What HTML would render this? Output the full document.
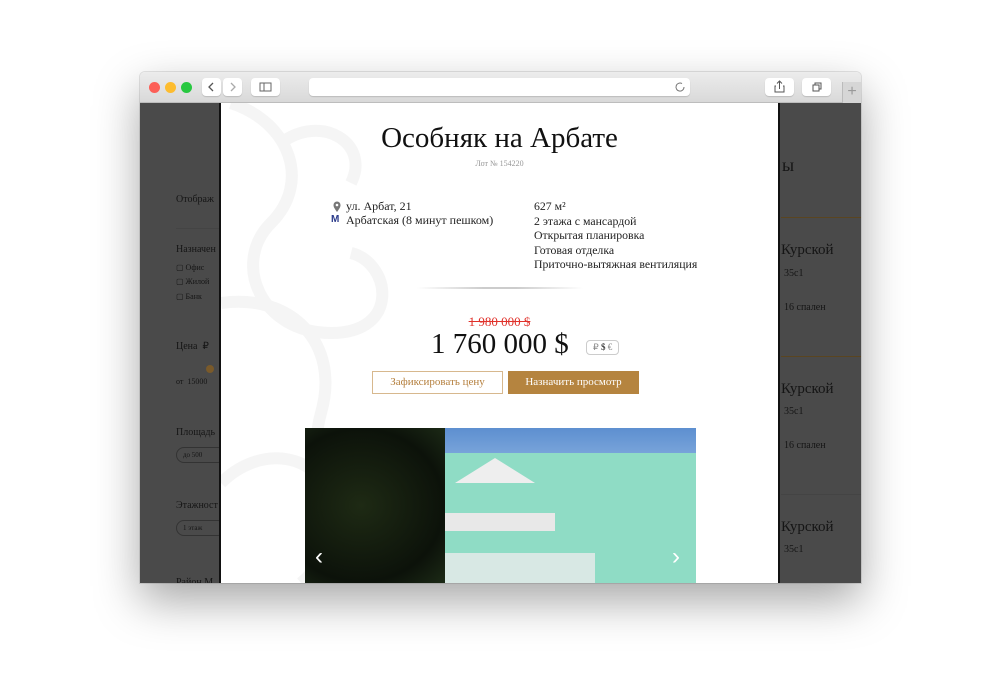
<!DOCTYPE html>
<html><head><meta charset="utf-8"><style>
*{margin:0;padding:0;box-sizing:border-box}
body{width:1000px;height:690px;background:#fff;position:relative;overflow:hidden;font-family:"Liberation Serif",serif}
.win{position:absolute;left:140px;top:72px;width:721px;height:511px;border-radius:5px 5px 0 0;overflow:hidden;box-shadow:0 18px 45px rgba(0,0,0,.35),0 0 0 1px rgba(0,0,0,.1)}
.tb{position:absolute;left:0;top:0;width:721px;height:31px;background:linear-gradient(#ececec,#d9d9d9);border-bottom:1px solid #bdbdbd}
.dot{position:absolute;top:10px;width:11px;height:11px;border-radius:50%}
.btn{position:absolute;top:6px;height:18px;background:#fff;border-radius:4px;box-shadow:0 1px 1px rgba(0,0,0,.15)}
.cont{position:absolute;left:0;top:31px;width:721px;height:480px;background:#4a4a4a;color:#1a1a1a;font-size:10px}
.s{position:absolute;color:#151515}
.modal{position:absolute;left:79px;top:0;width:561px;height:480px;background:#fff;border-left:2px solid #111;border-right:2px solid #111}
.t{position:absolute;white-space:nowrap;color:#222}
</style></head><body>
<div class="win">
<div class="tb">
<div class="dot" style="left:9px;background:#fc5f57"></div>
<div class="dot" style="left:25px;background:#fdbc2e"></div>
<div class="dot" style="left:41px;background:#28c840"></div>
<div class="btn" style="left:62px;width:19px"><svg width="19" height="18"><path d="M11 5l-4 4 4 4" stroke="#555" fill="none" stroke-width="1.3"/></svg></div>
<div class="btn" style="left:83px;width:19px"><svg width="19" height="18"><path d="M8 5l4 4-4 4" stroke="#aaa" fill="none" stroke-width="1.3"/></svg></div>
<div class="btn" style="left:111px;width:29px"><svg width="29" height="18"><rect x="9" y="5" width="11" height="8" stroke="#666" fill="none"/><line x1="13" y1="5" x2="13" y2="13" stroke="#666"/></svg></div>
<div class="btn" style="left:169px;width:381px"><svg width="381" height="18" style="position:absolute;left:0"><path d="M375 9a4 4 0 1 1-2-3.4" stroke="#777" fill="none"/></svg></div>
<div class="btn" style="left:625px;width:29px"><svg width="29" height="18"><path d="M14.5 3v8M12 5.5l2.5-2.5 2.5 2.5M11 8h-1v6h9v-6h-1" stroke="#555" fill="none"/></svg></div>
<div class="btn" style="left:662px;width:29px"><svg width="29" height="18"><rect x="11" y="7" width="6" height="6" stroke="#555" fill="none"/><path d="M13 7V5h6v6h-2" stroke="#555" fill="none"/></svg></div>
<div style="position:absolute;left:702px;top:10px;width:19px;height:21px;background:#d6d6d6;border-left:1px solid #bbb;color:#999;font:16px 'Liberation Sans';text-align:center;line-height:19px">+</div>
</div>
<div class="cont">
<div class="s" style="left:36px;top:91px">Отображ</div>
<div style="position:absolute;left:36px;top:125px;width:43px;border-top:1px solid #444"></div>
<div class="s" style="left:36px;top:141px">Назначен</div>
<div class="s" style="left:36px;top:160px;font-size:8px">▢ Офис</div>
<div class="s" style="left:36px;top:174px;font-size:8px">▢ Жилой</div>
<div class="s" style="left:36px;top:189px;font-size:8px">▢ Банк</div>
<div class="s" style="left:36px;top:238px">Цена &nbsp;₽</div>
<div style="position:absolute;left:66px;top:262px;width:8px;height:8px;border-radius:50%;background:#7a5a2a"></div>
<div class="s" style="left:36px;top:274px;font-size:8px">от &nbsp;15000</div>
<div class="s" style="left:36px;top:324px">Площадь</div>
<div class="s" style="left:36px;top:344px;font-size:7px;border:1px solid #333;border-radius:8px;padding:3px 6px;width:50px">до 500</div>
<div class="s" style="left:36px;top:397px">Этажност</div>
<div class="s" style="left:36px;top:417px;font-size:7px;border:1px solid #333;border-radius:8px;padding:3px 6px;width:50px">1 этаж</div>
<div class="s" style="left:36px;top:474px">Район М</div>
<div class="s" style="left:642px;top:52px;font-size:18px">ы</div>
<div style="position:absolute;left:641px;top:114px;width:80px;border-top:1px solid #5a4520"></div>
<div class="s" style="left:641px;top:139px;font-size:15px">Курской</div>
<div class="s" style="left:644px;top:165px">35с1</div>
<div class="s" style="left:644px;top:199px">16 спален</div>
<div style="position:absolute;left:641px;top:253px;width:80px;border-top:1px solid #5a4520"></div>
<div class="s" style="left:641px;top:278px;font-size:15px">Курской</div>
<div class="s" style="left:644px;top:303px">35с1</div>
<div class="s" style="left:644px;top:337px">16 спален</div>
<div style="position:absolute;left:641px;top:391px;width:80px;border-top:1px solid #444"></div>
<div class="s" style="left:641px;top:416px;font-size:15px">Курской</div>
<div class="s" style="left:644px;top:441px">35с1</div>
<div class="modal">
<svg style="position:absolute;left:0;top:0" width="230" height="480"><g fill="none" stroke="#f5f5f5" stroke-width="12"><path d="M10 0c60 20 80 80 40 120s-10 110 60 110 60-70 20-80"/><path d="M0 200c70-10 120 40 100 110s40 120 -20 170"/><path d="M60 40c40-30 90 0 70 40"/><path d="M0 380c40-40 100-30 110 20"/></g></svg>
<div class="t" style="left:0;width:557px;text-align:center;top:19px;font-size:29px;color:#111">Особняк на Арбате</div>
<div class="t" style="left:0;width:557px;text-align:center;top:56px;font-size:8px;color:#999">Лот № 154220</div>
<svg style="position:absolute;left:111px;top:98px" width="10" height="12"><path d="M5 11C2 7 1.5 5.5 1.5 4a3.5 3.5 0 0 1 7 0c0 1.5-.5 3-3.5 7z" fill="#777"/><circle cx="5" cy="4" r="1.3" fill="#fff"/></svg>
<div class="t" style="left:125px;top:96px;font-size:12px">ул. Арбат, 21</div>
<div class="t" style="left:110px;top:111px;font-size:10px;font-weight:bold;color:#2a3a8a;font-family:'Liberation Sans'">M</div>
<div class="t" style="left:125px;top:110px;font-size:12px">Арбатская (8 минут пешком)</div>
<div class="t" style="left:313px;top:96px;font-size:11.8px;line-height:14.5px">627 м²<br>2 этажа с мансардой<br>Открытая планировка<br>Готовая отделка<br>Приточно-вытяжная вентиляция</div>
<div style="position:absolute;left:196px;top:184px;width:166px;height:2px;background:linear-gradient(90deg,transparent,#ccc 40%,#ccc 60%,transparent)"></div>
<div class="t" style="left:0;width:557px;text-align:center;top:211px;font-size:13px;color:#e0312a;text-decoration:line-through">1 980 000 $</div>
<div class="t" style="left:210px;top:225px;font-size:29px;color:#111">1 760 000 $</div>
<div class="t" style="left:365px;top:237px;font-size:9px;color:#888;border:1px solid #ccc;border-radius:4px;padding:1px 6px">₽ <b style="color:#444">$</b> €</div>
<div class="t" style="left:151px;top:268px;width:131px;height:23px;border:1px solid #d7b88e;color:#b5803f;font-size:11px;text-align:center;line-height:21px">Зафиксировать цену</div>
<div class="t" style="left:287px;top:268px;width:131px;height:23px;background:#b5843f;color:#fff;font-size:11px;text-align:center;line-height:23px">Назначить просмотр</div>
<div style="position:absolute;left:84px;top:325px;width:391px;height:155px;overflow:hidden;background:linear-gradient(180deg,#5d8fd0,#9fc1e8 40%,#cfe0ef)">
<div style="position:absolute;left:110px;top:25px;width:290px;height:140px;background:#8fdcc5"></div>
<div style="position:absolute;left:150px;top:30px;width:80px;height:25px;background:#eee;clip-path:polygon(0 100%,50% 0,100% 100%)"></div>
<div style="position:absolute;left:130px;top:85px;width:120px;height:18px;background:#e8e8e8"></div>
<div style="position:absolute;left:90px;top:125px;width:200px;height:30px;background:#d8e8e4"></div>
<div style="position:absolute;left:0;top:0;width:140px;height:155px;background:radial-gradient(ellipse at 40% 50%,#1e2a14,#0c120a 70%,#1c2a16)"></div>
<div style="position:absolute;left:10px;top:115px;color:#fff;font:24px 'Liberation Sans'">‹</div>
<div style="position:absolute;left:367px;top:115px;color:#fff;font:24px 'Liberation Sans'">›</div>
</div>
</div>
</div>
</div>
</body></html>
